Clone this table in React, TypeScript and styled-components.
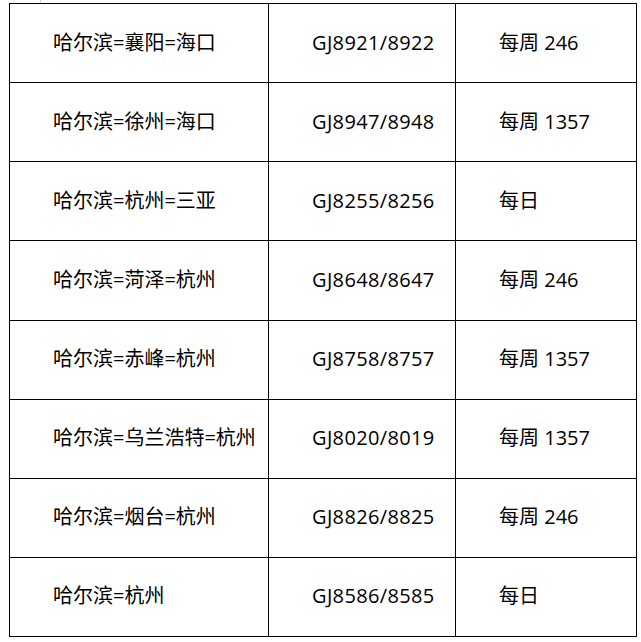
import styled, { createGlobalStyle } from 'styled-components';

const routes = [
	{ route: '哈尔滨=襄阳=海口', flight: 'GJ8921/8922', days: '每周 246' },
	{ route: '哈尔滨=徐州=海口', flight: 'GJ8947/8948', days: '每周 1357' },
	{ route: '哈尔滨=杭州=三亚', flight: 'GJ8255/8256', days: '每日' },
	{ route: '哈尔滨=菏泽=杭州', flight: 'GJ8648/8647', days: '每周 246' },
	{ route: '哈尔滨=赤峰=杭州', flight: 'GJ8758/8757', days: '每周 1357' },
	{ route: '哈尔滨=乌兰浩特=杭州', flight: 'GJ8020/8019', days: '每周 1357' },
	{ route: '哈尔滨=烟台=杭州', flight: 'GJ8826/8825', days: '每周 246' },
	{ route: '哈尔滨=杭州', flight: 'GJ8586/8585', days: '每日' },
];

export default function App() {
	return (
		<>
			<GlobalStyle />
			<Page>
				<TopGap />
				<Schedule>
					{routes.map(row => (
						<Row key={row.flight}>
							<Cell>{row.route}</Cell>
							<Cell $spaced>{row.flight}</Cell>
							<Cell>{row.days}</Cell>
						</Row>
					))}
				</Schedule>
			</Page>
		</>
	);
}

const GlobalStyle = createGlobalStyle`
	html, body {
		margin: 0;
		padding: 0;
		background: #fff;
	}
`;

const Page = styled.div`
	width: 641px;
	height: 642px;
	padding-left: 9px;
	box-sizing: border-box;
	font-family: 'Open Sans', 'Noto Sans CJK SC', sans-serif;
	font-size: 20px;
	color: #000;
`;

const TopGap = styled.div`
	height: 3px;
	margin-left: 31px;
	width: 1px;
	background: #d4d4d4;
`;

const Schedule = styled.div`
	display: grid;
	grid-template-columns: 259px 187px 181px;
	grid-auto-rows: 79.125px;
	width: max-content;
	border-top: 1px solid #000;
	border-left: 1px solid #000;
`;

const Row = styled.div`
	display: contents;
`;

const Cell = styled.div<{ $spaced?: boolean }>`
	display: flex;
	align-items: center;
	padding: 0 0 1px 43px;
	border-right: 1px solid #000;
	border-bottom: 1px solid #000;
	white-space: nowrap;
	line-height: 1;
	letter-spacing: ${({ $spaced }) => ($spaced ? '0.35px' : '0')};
`;
